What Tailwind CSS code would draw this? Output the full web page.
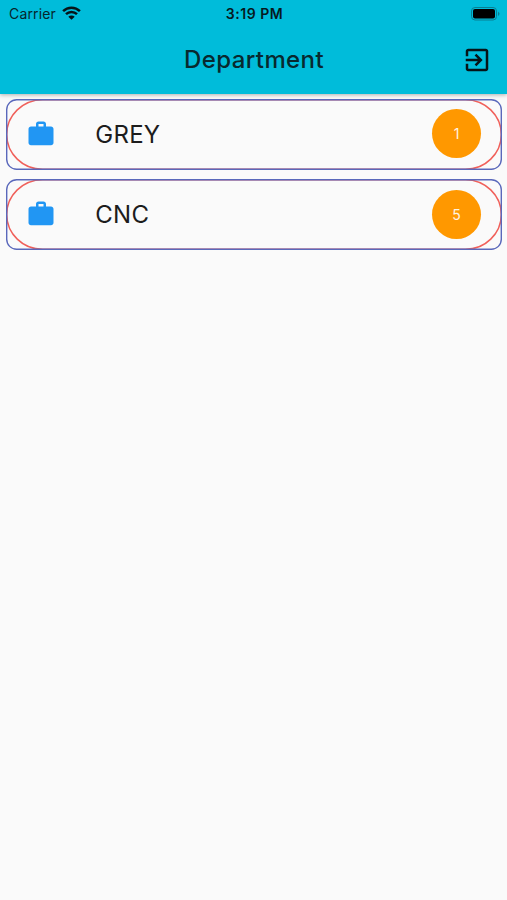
<!DOCTYPE html>
<html lang="en">
<head>
<meta charset="utf-8">
<title>Department</title>
<script src="https://cdn.jsdelivr.net/npm/@tailwindcss/browser@4"></script>
</head>
<body class="bg-[#fafafa] font-['Inter',sans-serif] text-[#1c1c1c]">
<div class="flex h-[900px] w-[507px] flex-col overflow-hidden">
  <header class="h-[94px] shrink-0 bg-[#00bcda] shadow-[0_1px_4px_rgba(0,0,0,0.3)]">
    <div class="grid h-[27px] grid-cols-3 items-center pr-[7px] pl-[9px] text-[14px] leading-[27px] text-[#06262c]">
      <div class="flex items-center gap-[6px]">
        <span class="tracking-[0.15px]">Carrier</span>
        <svg class="-mt-[2px] h-[14px] w-[19px]" viewBox="0 0 19 14" fill="none" stroke="#061418" stroke-width="2.5">
          <path d="M1.1 5.1a12 12 0 0 1 16.8 0"/><path d="M4 8.2a7.8 7.8 0 0 1 11 0"/><path fill="#061418" stroke="none" d="M9.5 13.8 6.3 10.7a4.6 4.6 0 0 1 6.4 0z"/>
        </svg>
      </div>
      <span class="text-center font-semibold tracking-[0.55px] whitespace-nowrap text-[#061a1f]">3:19 PM</span>
      <svg class="h-[14px] w-[29px] justify-self-end" viewBox="0 0 29 14">
        <rect x=".5" y=".5" width="25" height="12.5" rx="3.5" fill="none" stroke="#087f92"/>
        <rect x="2" y="2" width="22" height="9.5" rx="2" fill="#000"/>
        <path d="M27 4.5q3 2.3 0 4.6z" fill="#087f92"/>
      </svg>
    </div>
    <div class="grid h-[66px] grid-cols-[45px_1fr_45px] items-center">
      <span></span>
      <h1 class="pl-[1px] text-center text-[24px] font-[450] tracking-[0.4px] text-[#08292f]">Department</h1>
      <svg class="-mt-[1px] h-[30px] w-[30px]" viewBox="0 0 24 24" fill="#061418"><path d="M10.09 15.59 11.5 17l5-5-5-5-1.41 1.41L12.67 11H3v2h9.67l-2.58 2.59zM19 3H5c-1.11 0-2 .9-2 2v4h2V5h14v14H5v-4H3v4c0 1.1.89 2 2 2h14c1.1 0 2-.9 2-2V5c0-1.1-.9-2-2-2z"/></svg>
    </div>
  </header>
  <main class="flex flex-col gap-[9.5px] pt-[4.5px] pr-[5px] pl-[6px]">
    <div class="grid h-[71px]">
      <svg class="col-start-1 row-start-1 h-[71px] w-[496px]" viewBox="0 0 496 71" fill="none"><rect x=".7" y=".7" width="494.6" height="69.6" rx="36" ry="34.8" stroke="#f0605a" stroke-width="1.5"/><rect x=".7" y=".7" width="494.6" height="69.6" rx="10" stroke="#5a68bb" stroke-width="1.4"/></svg>
      <div class="col-start-1 row-start-1 flex items-center pr-[21px] pl-[20px]">
        <svg class="-mt-[1px] h-[30px] w-[30px]" viewBox="0 0 24 24" fill="#2196f3"><path d="M20 6h-4V4c0-1.11-.89-2-2-2h-4c-1.11 0-2 .89-2 2v2H4c-1.11 0-1.99.89-1.99 2L2 19c0 1.11.89 2 2 2h16c1.11 0 2-.89 2-2V8c0-1.11-.89-2-2-2zm-6 0h-4V4h4v2z"/></svg>
        <span class="ml-[39.2px] flex-1 pt-[1px] text-[24px] tracking-[0.3px]">GREY</span>
        <span class="-mt-[1px] flex h-[49px] w-[49px] items-center justify-center rounded-full bg-[#ff9800] text-[14px] text-[#fff3e0]">1</span>
      </div>
    </div>
    <div class="grid h-[71px]">
      <svg class="col-start-1 row-start-1 h-[71px] w-[496px]" viewBox="0 0 496 71" fill="none"><rect x=".7" y=".7" width="494.6" height="69.6" rx="36" ry="34.8" stroke="#f0605a" stroke-width="1.5"/><rect x=".7" y=".7" width="494.6" height="69.6" rx="10" stroke="#5a68bb" stroke-width="1.4"/></svg>
      <div class="col-start-1 row-start-1 flex items-center pr-[21px] pl-[20px]">
        <svg class="-mt-[1px] h-[30px] w-[30px]" viewBox="0 0 24 24" fill="#2196f3"><path d="M20 6h-4V4c0-1.11-.89-2-2-2h-4c-1.11 0-2 .89-2 2v2H4c-1.11 0-1.99.89-1.99 2L2 19c0 1.11.89 2 2 2h16c1.11 0 2-.89 2-2V8c0-1.11-.89-2-2-2zm-6 0h-4V4h4v2z"/></svg>
        <span class="ml-[39.2px] flex-1 pt-[1px] text-[24px] tracking-[0.3px]">CNC</span>
        <span class="flex h-[49px] w-[49px] items-center justify-center rounded-full bg-[#ff9800] text-[14px] text-[#fff3e0]">5</span>
      </div>
    </div>
  </main>
</div>
</body>
</html>
